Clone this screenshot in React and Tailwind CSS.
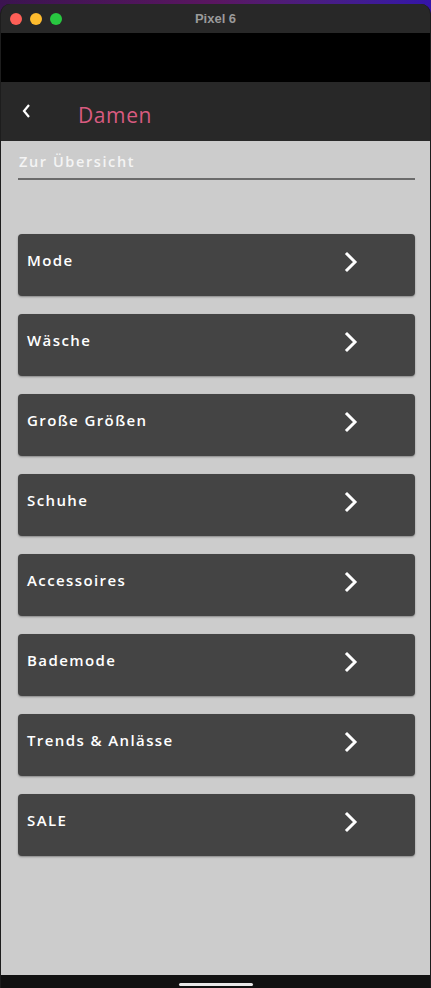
import React from 'react';

const categories = [
	'Mode',
	'Wäsche',
	'Große Größen',
	'Schuhe',
	'Accessoires',
	'Bademode',
	'Trends & Anlässe',
	'SALE',
];

const font = { fontFamily: '"Open Sans", "DejaVu Sans", sans-serif' };

const Chevron = () => (
	<svg width="16" height="22" viewBox="0 0 16 22" className="shrink-0 mt-[3px]">
		<polyline points="4,3 12,11 4,19" fill="none" stroke="white" strokeWidth="3" strokeLinecap="square" />
	</svg>
);

const CategoryRow = ({ label }) => (
	<button className="flex items-center justify-between h-[62px] w-full bg-[#444444] rounded-[4px] shadow-[0_1px_2px_rgba(0,0,0,0.35)] pl-[9px] pr-[56px] pb-[10px] text-left">
		<span className="text-white text-[15px] font-semibold tracking-[1.4px]">{label}</span>
		<Chevron />
	</button>
);

const App = () => {
	return (
		<div
			className="w-[431px] h-[988px] bg-gradient-to-r from-[#3b1450] via-[#5a1660] to-[#3414a8] pt-[4px] overflow-hidden"
			style={font}
		>
			<div className="h-[984px] flex flex-col rounded-t-[10px] overflow-hidden bg-[#1a1a1a] border-x border-[#1d1d1d]">
				{/* window title bar */}
				<div className="h-[29px] shrink-0 bg-[#282828] flex items-center relative">
					<div className="flex gap-[8px] pl-[9px]">
						<span className="w-[12px] h-[12px] rounded-full bg-[#fe5f57]" />
						<span className="w-[12px] h-[12px] rounded-full bg-[#febc2e]" />
						<span className="w-[12px] h-[12px] rounded-full bg-[#28c840]" />
					</div>
					<span
						className="absolute left-0 right-0 text-center text-[13px] font-bold text-[#9a9a9a]"
						style={{ fontFamily: '"Liberation Sans", sans-serif' }}
					>
						Pixel 6
					</span>
				</div>

				{/* status bar */}
				<div className="h-[49px] shrink-0 bg-black" />

				{/* app bar */}
				<div className="h-[59px] shrink-0 bg-[#282828] flex items-center">
					<svg width="12" height="16" viewBox="0 0 12 16" className="ml-[20px] mb-[1px]">
						<polyline points="8,2 3,8 8,14" fill="none" stroke="white" strokeWidth="2.2" />
					</svg>
					<h1 className="ml-[45px] text-[21px] font-medium text-[#d95b80] tracking-[0.6px] mt-[8px]">Damen</h1>
				</div>

				{/* content */}
				<div className="flex-1 bg-[#cccccc] pl-[17px] pr-[15px] pt-[8px] flex flex-col">
					<div className="pl-[1px] pb-[5px] border-b-2 border-[#6b6b6b]">
						<span className="text-[#f4f4f4] text-[14.5px] font-semibold tracking-[1.6px]">Zur Übersicht</span>
					</div>
					<div className="mt-[54px] flex flex-col gap-[18px]">
						{categories.map((c) => (
							<CategoryRow key={c} label={c} />
						))}
					</div>
				</div>

				{/* nav bar */}
				<div className="h-[13px] shrink-0 bg-[#111111] flex justify-center items-end pb-[2px]">
					<span className="w-[74px] h-[3px] rounded-full bg-[#e8e8e8]" />
				</div>
			</div>
		</div>
	);
};

export default App;
